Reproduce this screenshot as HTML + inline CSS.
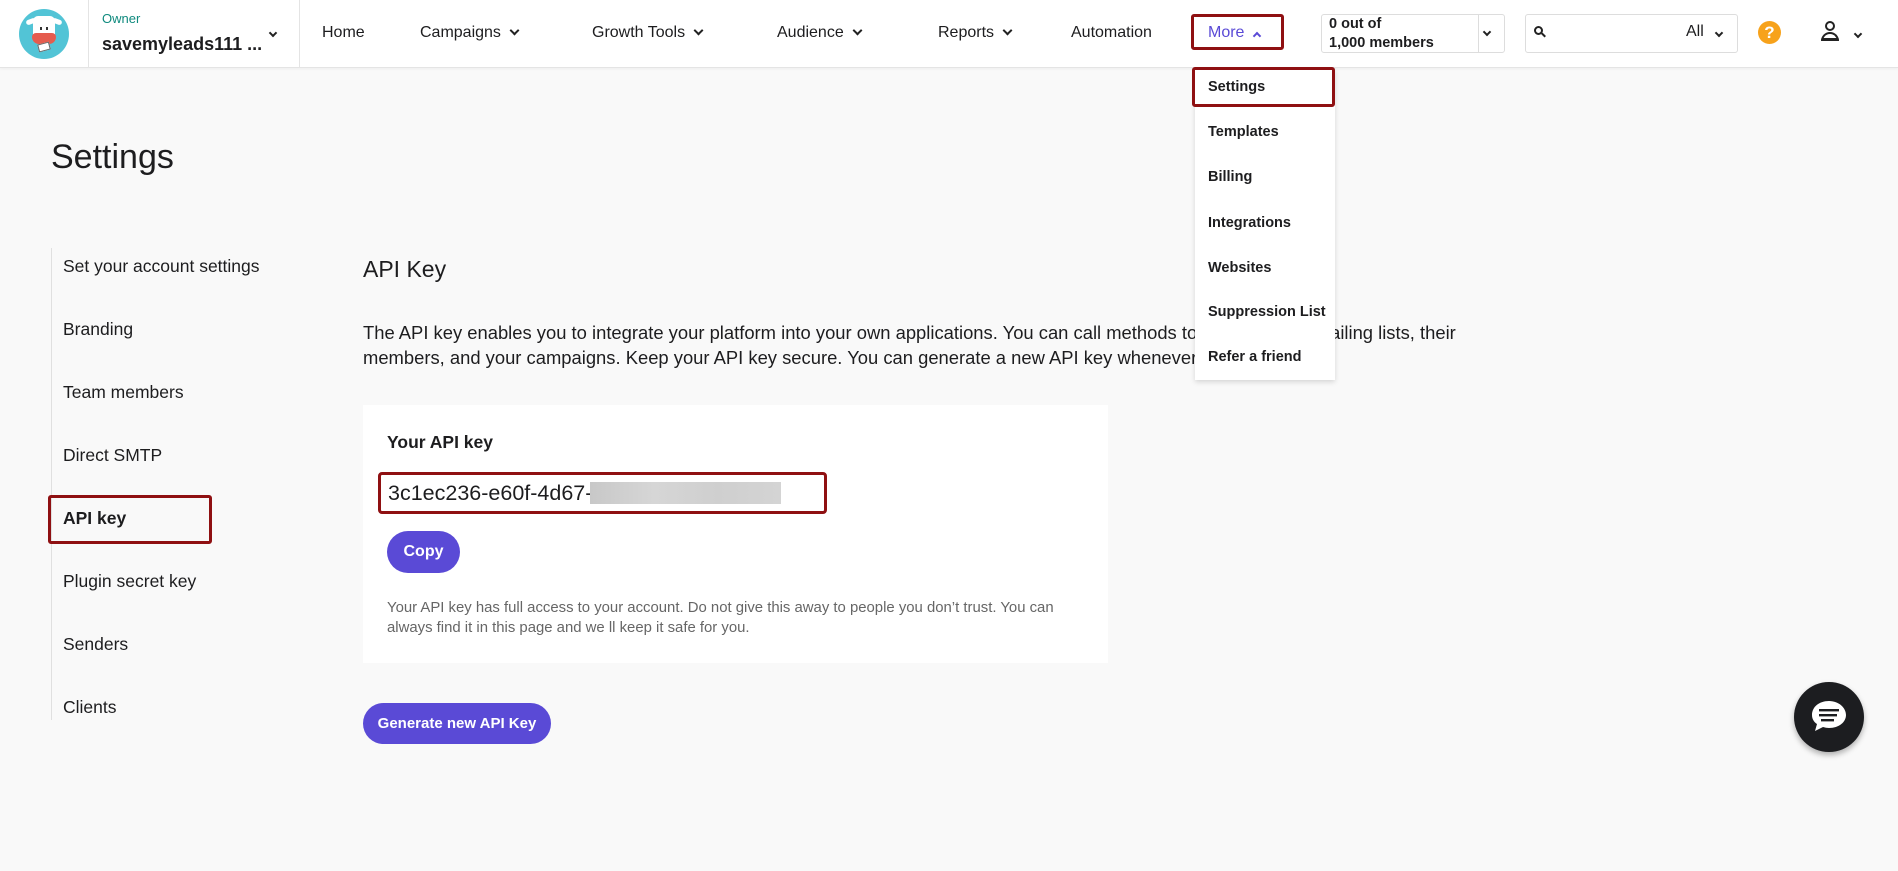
<!DOCTYPE html>
<html><head><meta charset="utf-8"><style>
*{box-sizing:border-box;margin:0;padding:0}
body{width:1898px;height:871px;background:#f9f9f9;font-family:"Liberation Sans",sans-serif;color:#1d1d1f;position:relative;overflow:hidden}
.a{position:absolute;white-space:nowrap}
.hdr{position:absolute;left:0;top:0;width:1898px;height:68px;background:#fff;border-bottom:1px solid #e4e4e4;box-shadow:0 1px 3px rgba(0,0,0,.05)}
.nav{font-size:16px;top:24px;color:#1d1d1f}
.chev{display:inline-block;width:7px;height:7px;border-right:2px solid #222;border-bottom:2px solid #222;transform:rotate(45deg);margin-left:10px;position:relative;top:-3px}
.side{font-size:17.5px;left:63px;color:#1d1d1f}
.dd{font-size:14.5px;font-weight:bold;left:1208px}
.btn{position:absolute;background:#5a4ad6;color:#fff;font-weight:bold;border-radius:22px;text-align:center}
</style></head><body>
<div class="hdr"></div>
<div class="a" style="left:19px;top:9px;width:50px;height:50px;border-radius:50%;background:#52c4d6"></div>
<div class="a" style="left:26px;top:19px;width:10px;height:5px;background:#fff;border-radius:3px;transform:rotate(-20deg)"></div>
<div class="a" style="left:52px;top:19px;width:10px;height:5px;background:#fff;border-radius:3px;transform:rotate(20deg)"></div>
<div class="a" style="left:33px;top:16px;width:22px;height:22px;background:#fff;border-radius:5px 5px 3px 3px"></div>
<div class="a" style="left:40px;top:27px;width:2px;height:3px;background:#333"></div>
<div class="a" style="left:46px;top:27px;width:2px;height:3px;background:#333"></div>
<div class="a" style="left:32px;top:33px;width:24px;height:11px;background:#e55c4e;border-radius:4px 4px 7px 7px"></div>
<div class="a" style="left:38px;top:43px;width:12px;height:8px;background:#fff;border:1px solid #666;transform:rotate(-15deg)"></div>
<div class="a" style="left:88px;top:0;width:1px;height:68px;background:#e4e4e4"></div>
<div class="a" style="left:299px;top:0;width:1px;height:68px;background:#e4e4e4"></div>
<div class="a" style="left:102px;top:11px;font-size:13px;color:#0f8a7e">Owner</div>
<div class="a" style="left:102px;top:34px;font-size:18px;font-weight:bold">savemyleads111 ...</div>
<div class="a" style="left:270px;top:26px"><span class="chev" style="margin:0;width:6px;height:6px"></span></div>
<div class="a nav" style="left:322px">Home</div>
<div class="a nav" style="left:420px">Campaigns<span class="chev"></span></div>
<div class="a nav" style="left:592px">Growth Tools<span class="chev"></span></div>
<div class="a nav" style="left:777px">Audience<span class="chev"></span></div>
<div class="a nav" style="left:938px">Reports<span class="chev"></span></div>
<div class="a nav" style="left:1071px">Automation</div>
<div class="a" style="left:1191px;top:14px;width:93px;height:36px;border:3px solid #8f1012;border-radius:3px"></div>
<div class="a nav" style="left:1208px;color:#5a4ad6">More<span class="chev" style="transform:rotate(225deg);top:2px;border-color:#5a4ad6;width:6px;height:6px"></span></div>
<div class="a" style="left:1321px;top:14px;width:184px;height:39px;border:1px solid #ddd;border-radius:3px"></div>
<div class="a" style="left:1478px;top:14px;width:1px;height:39px;background:#ddd"></div>
<div class="a" style="left:1329px;top:15px;font-size:14.5px;font-weight:bold;line-height:19px">0 out of<br>1,000 members</div>
<div class="a" style="left:1484px;top:25px"><span class="chev" style="margin:0;width:6px;height:6px"></span></div>
<div class="a" style="left:1525px;top:14px;width:213px;height:39px;border:1px solid #ddd;border-radius:3px"></div>
<div class="a" style="left:1534px;top:26px;width:9px;height:9px;border:2px solid #222;border-radius:50%"></div>
<div class="a" style="left:1541px;top:34px;width:5px;height:2px;background:#222;transform:rotate(45deg)"></div>
<div class="a" style="left:1686px;top:23px;font-size:16px">All</div>
<div class="a" style="left:1716px;top:26px"><span class="chev" style="margin:0;width:6px;height:6px"></span></div>
<div class="a" style="left:1758px;top:21px;width:23px;height:23px;border-radius:50%;background:#f7a21b;color:#fff;font-size:17px;text-align:center;line-height:23px;font-weight:bold">?</div>
<div class="a" style="left:1825px;top:21px;width:10px;height:10px;border:2px solid #222;border-radius:50%"></div>
<div class="a" style="left:1821px;top:32px;width:18px;height:9px;border:2px solid #222;border-bottom-width:3px;border-radius:9px 9px 0 0"></div>
<div class="a" style="left:1855px;top:27px"><span class="chev" style="margin:0;width:6px;height:6px"></span></div>

<div class="a" style="left:51px;top:138px;font-size:34px">Settings</div>
<div class="a" style="left:51px;top:248px;width:1px;height:472px;background:#e0e0e0"></div>
<div class="a side" style="top:256px">Set your account settings</div>
<div class="a side" style="top:319px">Branding</div>
<div class="a side" style="top:382px">Team members</div>
<div class="a side" style="top:445px">Direct SMTP</div>
<div class="a" style="left:48px;top:495px;width:164px;height:49px;border:3px solid #8f1012;border-radius:3px"></div>
<div class="a side" style="top:508px;font-weight:bold">API key</div>
<div class="a side" style="top:571px">Plugin secret key</div>
<div class="a side" style="top:634px">Senders</div>
<div class="a side" style="top:697px">Clients</div>

<div class="a" style="left:363px;top:256px;font-size:23px">API Key</div>
<div class="a" style="left:363px;top:320px;font-size:18.4px;line-height:25px">The API key enables you to integrate your platform into your own applications. You can call methods to manage your mailing lists, their<br>members, and your campaigns. Keep your API key secure. You can generate a new API key whenever you</div>
<div class="a" style="left:1195px;top:69px;width:140px;height:311px;background:#fff;box-shadow:0 2px 5px rgba(0,0,0,.15)"></div>
<div class="a" style="left:1192px;top:67px;width:143px;height:40px;border:3px solid #8f1012;border-radius:3px"></div>
<div class="a dd" style="top:79px">Settings</div>
<div class="a dd" style="top:124px">Templates</div>
<div class="a dd" style="top:169px">Billing</div>
<div class="a dd" style="top:215px">Integrations</div>
<div class="a dd" style="top:260px">Websites</div>
<div class="a dd" style="top:304px">Suppression List</div>
<div class="a dd" style="top:349px">Refer a friend</div>

<div class="a" style="left:363px;top:405px;width:745px;height:258px;background:#fff"></div>
<div class="a" style="left:387px;top:432px;font-size:17.5px;font-weight:bold">Your API key</div>
<div class="a" style="left:378px;top:472px;width:449px;height:42px;border:3px solid #8f1012;border-radius:4px;background:#fff"></div>
<div class="a" style="left:388px;top:481px;font-size:21.5px">3c1ec236-e60f-4d67-</div>
<div class="a" style="left:590px;top:482px;width:191px;height:22px;background:linear-gradient(90deg,#c8c8c8,#d6d6d6,#cfcfcf,#d4d4d4)"></div>
<div class="btn" style="left:387px;top:531px;width:73px;height:42px;line-height:42px;font-size:16px">Copy</div>
<div class="a" style="left:387px;top:598px;font-size:14.9px;line-height:20px;color:#666">Your API key has full access to your account. Do not give this away to people you don’t trust. You can<br>always find it in this page and we ll keep it safe for you.</div>
<div class="btn" style="left:363px;top:703px;width:188px;height:41px;line-height:41px;font-size:15px">Generate new API Key</div>

<div class="a" style="left:1794px;top:682px;width:70px;height:70px;border-radius:50%;background:#1c1d20;box-shadow:0 3px 6px rgba(0,0,0,.3)"></div>
<svg class="a" style="left:1809px;top:698px" width="40" height="38" viewBox="0 0 40 38"><path d="M20 3C10 3 3 9 3 17c0 4 2 7 5 9l-2 7 8-4c2 .6 4 1 6 1 10 0 17-6 17-13S30 3 20 3z" fill="#fff"/><rect x="10" y="11" width="20" height="2.4" fill="#1c1d20"/><rect x="10" y="16" width="18" height="2.4" fill="#1c1d20"/><rect x="12" y="21" width="13" height="2.4" fill="#1c1d20"/></svg>
</body></html>
